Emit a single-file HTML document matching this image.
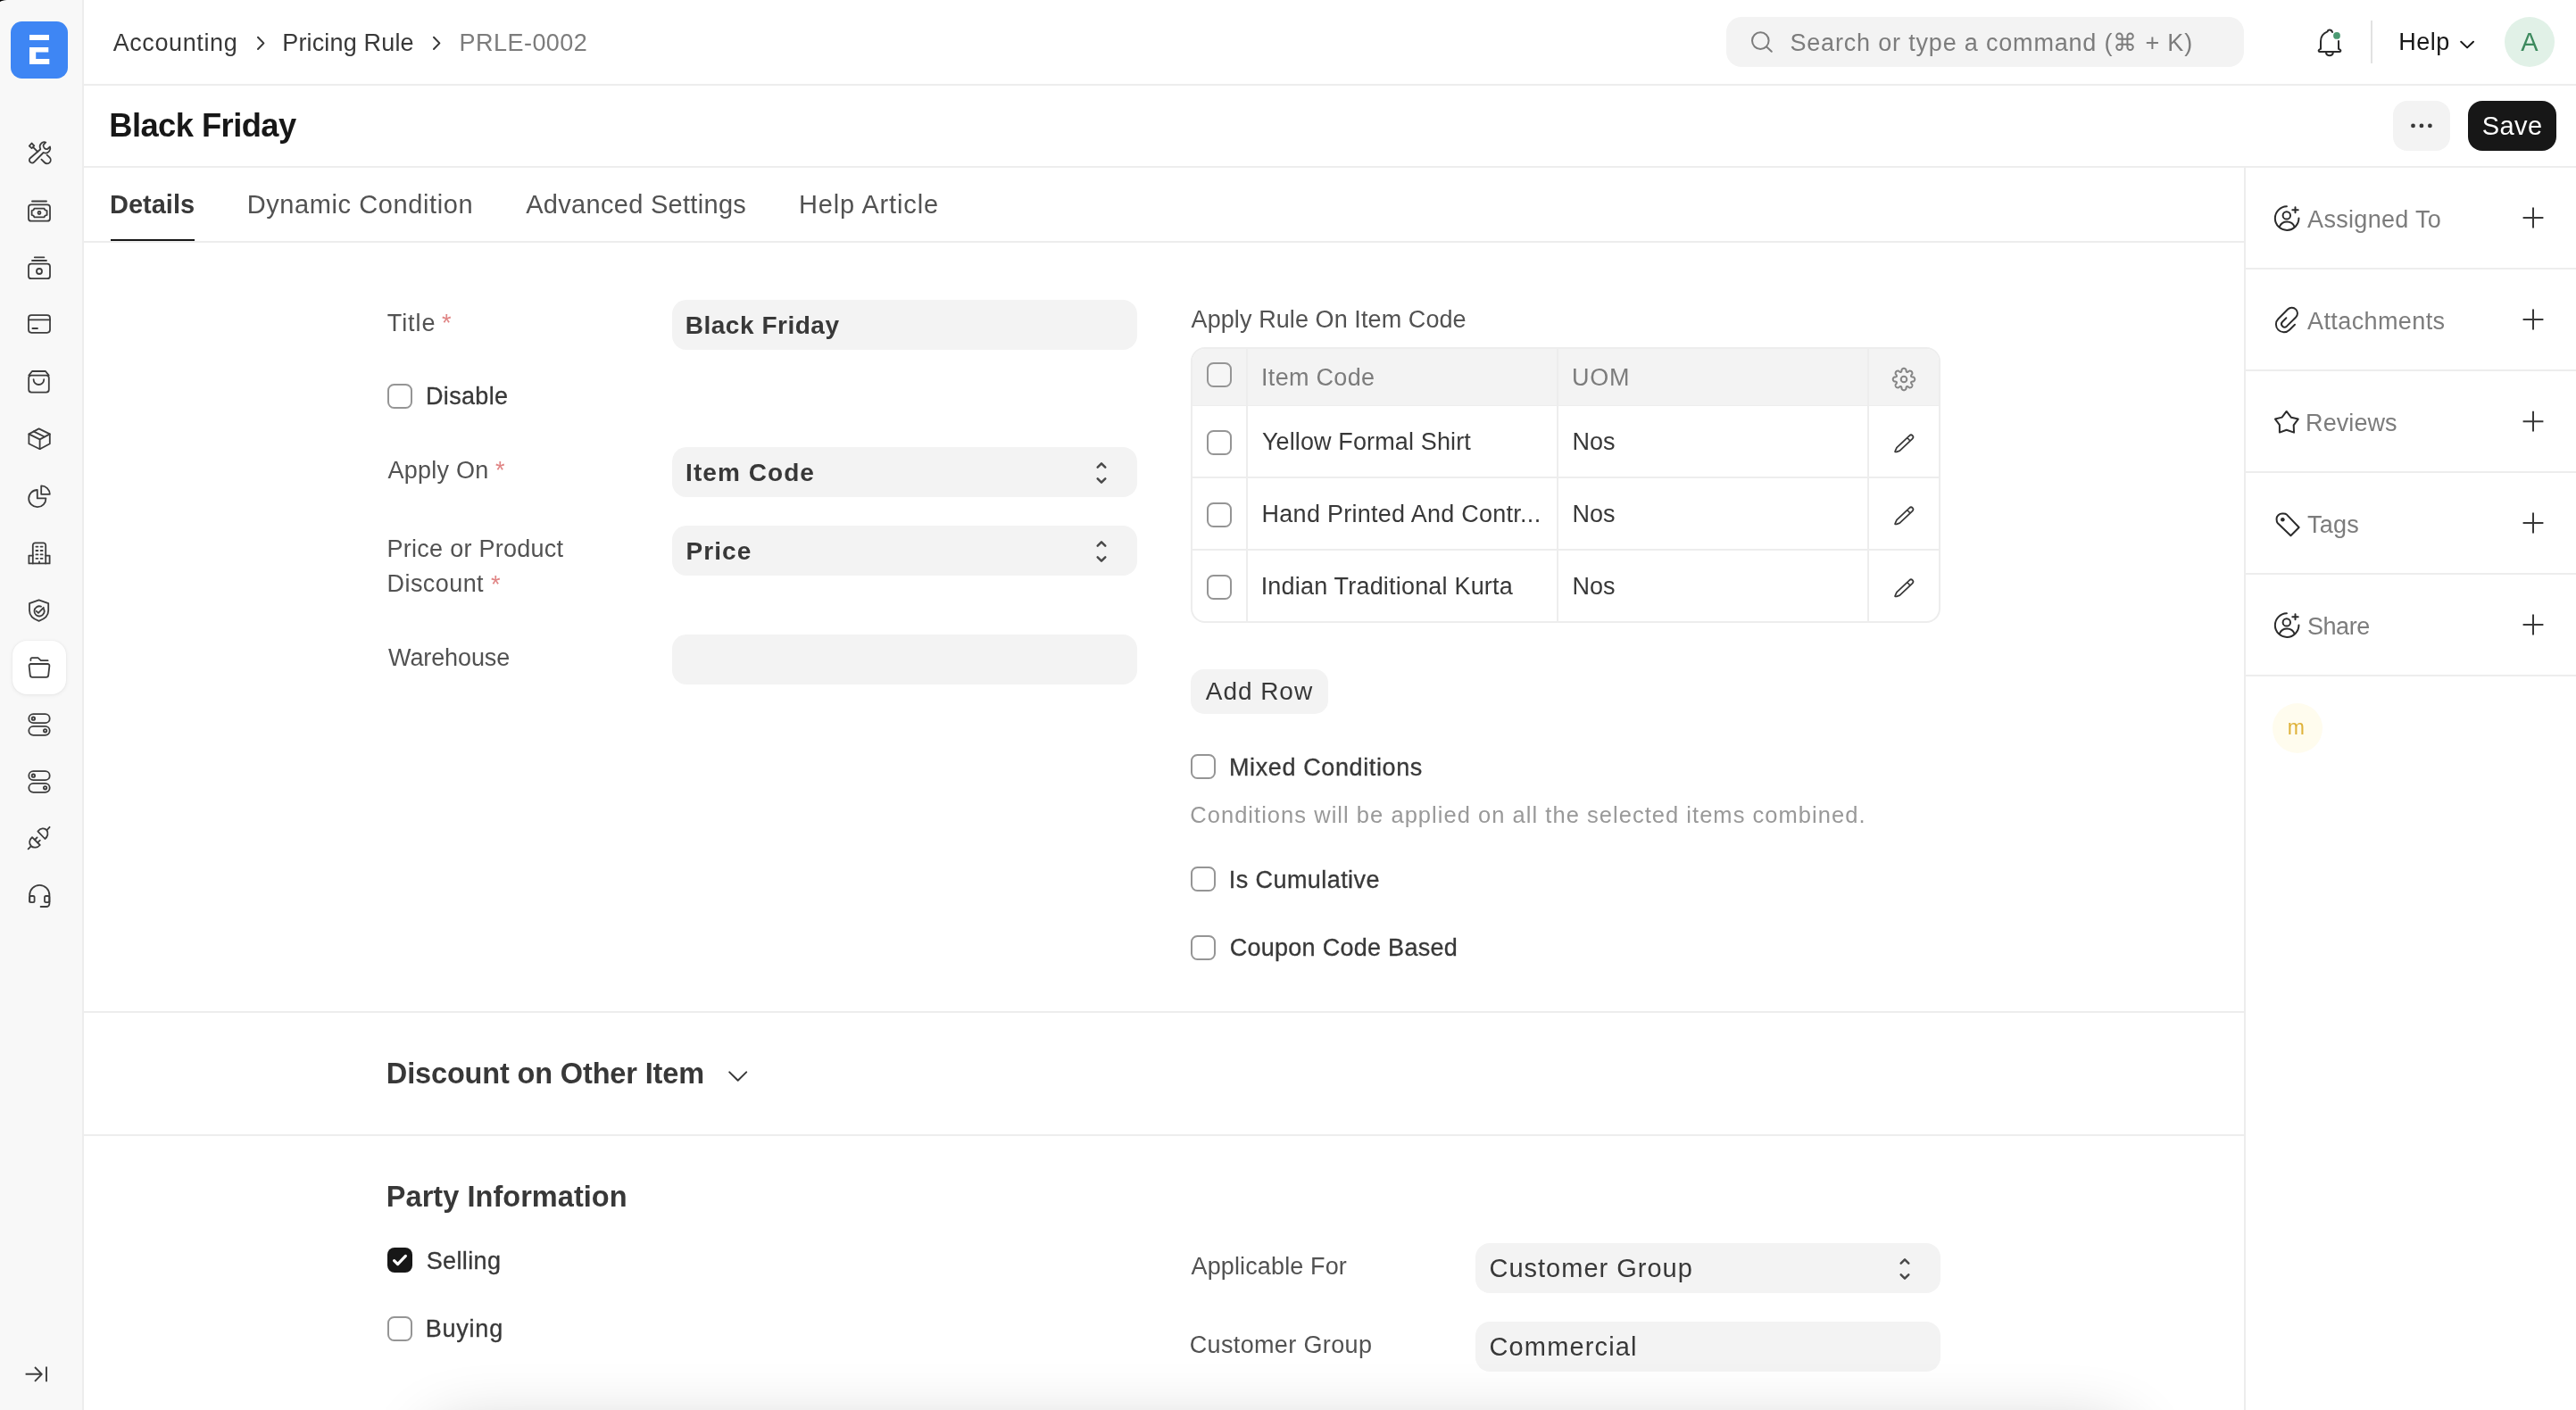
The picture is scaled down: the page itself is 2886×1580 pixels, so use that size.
<!DOCTYPE html>
<html lang="en"><head><meta charset="utf-8"><title>Black Friday - PRLE-0002</title>
<style>
html,body{margin:0;padding:0;}
body{width:2886px;height:1580px;overflow:hidden;background:#fff;position:relative;font-family:"Liberation Sans",sans-serif;}
.b{position:absolute;box-sizing:border-box;display:block;}
.tl{position:absolute;left:0;top:0;width:2886px;height:1580px;will-change:transform;}
.t{position:absolute;white-space:pre;line-height:1;display:block;font-kerning:normal;}
</style></head><body>
<div class="b" style="left:0px;top:0px;width:92px;height:1580px;background:#f8f8f8;"></div>
<div class="b" style="left:92px;top:0px;width:2px;height:1580px;background:#ededed;"></div>
<div class="b" style="left:12px;top:24px;width:64px;height:64px;background:#3e86f4;border-radius:12.5px;"></div>
<div class="b" style="left:14px;top:718px;width:60px;height:60px;background:#ffffff;border-radius:16px;box-shadow:0 1px 5px rgba(0,0,0,0.07),0 0 2px rgba(0,0,0,0.06);"></div>
<div class="b" style="left:94px;top:94px;width:2792px;height:2px;background:#ededed;"></div>
<div class="b" style="left:94px;top:186px;width:2792px;height:2px;background:#ededed;"></div>
<div class="b" style="left:94px;top:270px;width:2420px;height:2px;background:#ededed;"></div>
<div class="b" style="left:124px;top:268px;width:94px;height:2px;background:#171717;"></div>
<div class="b" style="left:2514px;top:188px;width:2px;height:1392px;background:#ededed;"></div>
<div class="b" style="left:2516px;top:300px;width:370px;height:2px;background:#ededed;"></div>
<div class="b" style="left:2516px;top:414px;width:370px;height:2px;background:#ededed;"></div>
<div class="b" style="left:2516px;top:528px;width:370px;height:2px;background:#ededed;"></div>
<div class="b" style="left:2516px;top:642px;width:370px;height:2px;background:#ededed;"></div>
<div class="b" style="left:2516px;top:756px;width:370px;height:2px;background:#ededed;"></div>
<div class="b" style="left:94px;top:1133px;width:2420px;height:2px;background:#ededed;"></div>
<div class="b" style="left:94px;top:1271px;width:2420px;height:2px;background:#ededed;"></div>
<div class="b" style="left:1934px;top:19px;width:580px;height:56px;background:#f3f3f3;border-radius:17px;"></div>
<div class="b" style="left:2656px;top:23px;width:2px;height:48px;background:#e2e2e2;"></div>
<div class="b" style="left:2806px;top:19px;width:56px;height:56px;background:#e1f1e7;border-radius:28px;"></div>
<div class="b" style="left:2681px;top:113px;width:64px;height:56px;background:#f3f3f3;border-radius:16px;"></div>
<div class="b" style="left:2765px;top:113px;width:99px;height:56px;background:#171717;border-radius:16px;"></div>
<div class="b" style="left:753px;top:336px;width:521px;height:56px;background:#f3f3f3;border-radius:16px;"></div>
<div class="b" style="left:753px;top:501px;width:521px;height:56px;background:#f3f3f3;border-radius:16px;"></div>
<div class="b" style="left:753px;top:589px;width:521px;height:56px;background:#f3f3f3;border-radius:16px;"></div>
<div class="b" style="left:753px;top:711px;width:521px;height:56px;background:#f3f3f3;border-radius:16px;"></div>
<div class="b" style="left:1653px;top:1393px;width:521px;height:56px;background:#f3f3f3;border-radius:16px;"></div>
<div class="b" style="left:1653px;top:1481px;width:521px;height:56px;background:#f3f3f3;border-radius:16px;"></div>
<div class="b" style="left:434px;top:430px;width:28px;height:28px;background:#fff;border-radius:7.5px;border:2px solid #959595;"></div>
<div class="b" style="left:1334px;top:845px;width:28px;height:28px;background:#fff;border-radius:7.5px;border:2px solid #959595;"></div>
<div class="b" style="left:1334px;top:971px;width:28px;height:28px;background:#fff;border-radius:7.5px;border:2px solid #959595;"></div>
<div class="b" style="left:1334px;top:1048px;width:28px;height:28px;background:#fff;border-radius:7.5px;border:2px solid #959595;"></div>
<div class="b" style="left:434px;top:1475px;width:28px;height:28px;background:#fff;border-radius:7.5px;border:2px solid #959595;"></div>
<div class="b" style="left:434px;top:1398px;width:28px;height:28px;background:#171717;border-radius:8px;"></div>
<div class="b" style="left:1334px;top:389px;width:840px;height:309px;background:#fff;border-radius:16px;border:2px solid #ededed;"></div>
<div class="b" style="left:1336px;top:391px;width:836px;height:63px;background:#f3f3f3;border-radius:14px 14px 0 0;"></div>
<div class="b" style="left:1336px;top:454px;width:836px;height:1px;background:#ededed;"></div>
<div class="b" style="left:1336px;top:534px;width:836px;height:2px;background:#ededed;"></div>
<div class="b" style="left:1336px;top:615px;width:836px;height:2px;background:#ededed;"></div>
<div class="b" style="left:1396px;top:391px;width:2px;height:305px;background:#ededed;"></div>
<div class="b" style="left:1744px;top:391px;width:2px;height:305px;background:#ededed;"></div>
<div class="b" style="left:2092px;top:391px;width:2px;height:305px;background:#ededed;"></div>
<div class="b" style="left:1352px;top:406px;width:28px;height:28px;background:#f6f6f6;border-radius:7.5px;border:2px solid #959595;"></div>
<div class="b" style="left:1352px;top:482px;width:28px;height:28px;background:#fff;border-radius:7.5px;border:2px solid #959595;"></div>
<div class="b" style="left:1352px;top:563px;width:28px;height:28px;background:#fff;border-radius:7.5px;border:2px solid #959595;"></div>
<div class="b" style="left:1352px;top:644px;width:28px;height:28px;background:#fff;border-radius:7.5px;border:2px solid #959595;"></div>
<div class="b" style="left:1334px;top:750px;width:154px;height:50px;background:#f3f3f3;border-radius:15px;"></div>
<div class="b" style="left:2546px;top:788px;width:56px;height:56px;background:#fffcee;border-radius:28px;"></div>
<div class="b" style="left:484px;top:1604px;width:1900px;height:200px;background:#fff;border-radius:30px;box-shadow:0 0 74px rgba(0,0,0,0.24);"></div>
<svg class="b" style="left:12px;top:24px" width="64" height="64" viewBox="12 24 64 64" fill="none" stroke="#383838" stroke-width="2" stroke-linecap="round" stroke-linejoin="round"><path d="M33 39h22v6H33z M33 53h21.3v5.6H40.2v7.4H55.3v6H33z" fill="#fff" stroke="none"/></svg>
<svg class="b" style="left:28px;top:156px" width="32" height="32" viewBox="28 156 32 32" fill="none" stroke="#3d3d3d" stroke-width="1.8" stroke-linecap="round" stroke-linejoin="round">
<path d="M45.3 167.2C44.2 164.7 44.8 161.7 47 160.1C48.3 159.2 50 159 51.3 159.5L48.6 162.3C48.3 163.6 48.8 165.1 49.6 165.9C50.5 166.9 52 167.4 53.3 167L56 164.4C56.6 166 56.3 167.8 55.3 169.2C53.8 171.3 51 172 48.6 171L38.2 181.6C37 182.8 35 182.8 33.8 181.6C32.6 180.4 32.6 178.4 33.8 177.2Z"/>
<path d="M32.8 163.6L35.5 160.5L38.3 163.3L35.6 166.1Z M37 164.8L42.3 170.2"/>
<path d="M46.4 178.6L49.8 182C51.5 183.7 54.3 183.7 55.8 182C57.2 180.4 57 177.9 55.5 176.4L52.6 173.6"/>
</svg>
<svg class="b" style="left:28px;top:220px" width="32" height="32" viewBox="28 220 32 32" fill="none" stroke="#3d3d3d" stroke-width="1.8" stroke-linecap="round" stroke-linejoin="round">
<path d="M36 225.5H52"/>
<rect x="32" y="229.3" width="24" height="18.4" rx="3"/>
<path d="M38.6 233.6H49.4L50.6 235.4L52.6 236V241L50.6 241.6L49.4 243.4H38.6L37.4 241.6L35.6 241V236L37.4 235.4Z"/>
<circle cx="44" cy="238.5" r="1.5"/>
</svg>
<svg class="b" style="left:28px;top:284px" width="32" height="32" viewBox="28 284 32 32" fill="none" stroke="#3d3d3d" stroke-width="1.8" stroke-linecap="round" stroke-linejoin="round">
<path d="M38.8 288.3H49.4 M36 292H52"/>
<rect x="32" y="295.7" width="24" height="16.5" rx="3"/>
<circle cx="44" cy="304" r="3"/>
</svg>
<svg class="b" style="left:28px;top:348px" width="32" height="32" viewBox="28 348 32 32" fill="none" stroke="#3d3d3d" stroke-width="1.8" stroke-linecap="round" stroke-linejoin="round">
<rect x="32" y="353.2" width="24" height="19.6" rx="3.2"/>
<path d="M32 358.4H56 M36.4 368H42"/>
</svg>
<svg class="b" style="left:28px;top:412px" width="32" height="32" viewBox="28 412 32 32" fill="none" stroke="#3d3d3d" stroke-width="1.8" stroke-linecap="round" stroke-linejoin="round">
<path d="M32.3 420.6L36 416H51L54.7 420.6"/>
<rect x="32.2" y="420.6" width="22.6" height="19" rx="3"/>
<path d="M37.6 425.2A5.8 5.8 0 0 0 49.2 425.2"/>
</svg>
<svg class="b" style="left:28px;top:476px" width="32" height="32" viewBox="28 476 32 32" fill="none" stroke="#3d3d3d" stroke-width="1.8" stroke-linecap="round" stroke-linejoin="round">
<path d="M43.6 480.4L55.8 486.4V497.2L44.6 503.2L32.4 497.2V486.4Z"/>
<path d="M32.4 486.4L44.6 492.4L55.8 486.4 M44.6 492.4V503.2 M37.6 483.4L50 489.5"/>
</svg>
<svg class="b" style="left:28px;top:540px" width="32" height="32" viewBox="28 540 32 32" fill="none" stroke="#3d3d3d" stroke-width="1.8" stroke-linecap="round" stroke-linejoin="round">
<path d="M41.8 549A9.6 9.6 0 1 0 51.4 558.4H41.8Z"/>
<path d="M46.2 544.4A9.6 9.6 0 0 1 55.8 553.8H46.2Z"/>
</svg>
<svg class="b" style="left:28px;top:604px" width="32" height="32" viewBox="28 604 32 32" fill="none" stroke="#3d3d3d" stroke-width="1.8" stroke-linecap="round" stroke-linejoin="round">
<path d="M36.8 631.4V611A2.6 2.6 0 0 1 39.4 608.4H48.6A2.6 2.6 0 0 1 51.2 611V631.4"/>
<path d="M36.8 622.6H32.4V631.4H55.6V622.6H51.2"/>
<path d="M40.4 612.6H42.4 M45.6 612.6H47.6 M40.4 617H42.4 M45.6 617H47.6 M40.4 621.4H42.4 M45.6 621.4H47.6 M40.4 625.8H42.4 M45.6 625.8H47.6 M44 629.4V631"/>
</svg>
<svg class="b" style="left:28px;top:668px" width="32" height="32" viewBox="28 668 32 32" fill="none" stroke="#3d3d3d" stroke-width="1.8" stroke-linecap="round" stroke-linejoin="round">
<path d="M43.6 672.4L54.2 676.2V684C54.2 690 49.6 693.8 43.6 695.8C37.6 693.8 33 690 33 684V676.2Z"/>
<path d="M49 682.2A5.6 5.6 0 1 1 46 679.6"/>
<path d="M40.8 684.8L43 686.8L48.8 680.8"/>
</svg>
<svg class="b" style="left:28px;top:732px" width="32" height="32" viewBox="28 732 32 32" fill="none" stroke="#3d3d3d" stroke-width="1.8" stroke-linecap="round" stroke-linejoin="round">
<path d="M34.4 740V738.6A1.4 1.4 0 0 1 35.8 737.2H42.6L45.8 740.2H53.6"/>
<path d="M34.6 744H53.4A2 2 0 0 1 55.4 746.2L54.2 756.6A2.4 2.4 0 0 1 51.8 758.8H36.2A2.4 2.4 0 0 1 33.8 756.6L32.6 746.2A2 2 0 0 1 34.6 744Z"/>
</svg>
<svg class="b" style="left:28px;top:796px" width="32" height="32" viewBox="28 796 32 32" fill="none" stroke="#3d3d3d" stroke-width="1.8" stroke-linecap="round" stroke-linejoin="round">
<rect x="32.3" y="800.2" width="23.4" height="10" rx="5"/>
<rect x="32.3" y="813.8" width="23.4" height="10" rx="5"/>
<circle cx="37.4" cy="805.2" r="1.7"/>
<circle cx="50.6" cy="818.8" r="1.7"/>
</svg>
<svg class="b" style="left:28px;top:860px" width="32" height="32" viewBox="28 860 32 32" fill="none" stroke="#3d3d3d" stroke-width="1.8" stroke-linecap="round" stroke-linejoin="round">
<rect x="32.3" y="864.2" width="23.4" height="10" rx="5"/>
<rect x="32.3" y="877.8" width="23.4" height="10" rx="5"/>
<circle cx="37.4" cy="869.2" r="1.7"/>
<circle cx="50.6" cy="882.8" r="1.7"/>
</svg>
<svg class="b" style="left:28px;top:922px" width="32" height="34" viewBox="28 922 32 34" fill="none" stroke="#3d3d3d" stroke-width="1.8" stroke-linecap="round" stroke-linejoin="round">
<path d="M42.4 931.6L50.4 940C53.4 937.6 54.6 933.4 52.4 930.4C50 927.4 45.4 927.6 42.4 931.6Z"/>
<path d="M52.8 929.8L55.6 926.8"/>
<path d="M36 938.2L44.8 947C42 950.2 37.4 950.6 34.8 948C32.2 945.4 32.6 941 36 938.2Z"/>
<path d="M34.4 948.6L31.6 951.4 M39 941L41.6 938.4 M42.2 944.2L44.8 941.6"/>
</svg>
<svg class="b" style="left:28px;top:986px" width="32" height="34" viewBox="28 986 32 34" fill="none" stroke="#3d3d3d" stroke-width="1.8" stroke-linecap="round" stroke-linejoin="round">
<path d="M33.2 1010.4V1003A11.1 11.1 0 0 1 55.4 1003V1010.4"/>
<rect x="33.2" y="1004" width="5.4" height="7.2" rx="1.6"/>
<rect x="50" y="1004" width="5.4" height="7.2" rx="1.6"/>
<path d="M55.4 1010.4V1012.6A3.4 3.4 0 0 1 52 1016H45.6"/>
</svg>
<svg class="b" style="left:24px;top:1526px" width="34" height="28" viewBox="24 1526 34 28" fill="none" stroke="#3d3d3d" stroke-width="1.9" stroke-linecap="butt" stroke-linejoin="round"><path d="M28.6 1539.8H46.6 M39 1532L46.8 1539.8L39 1547.8 M52 1531.6V1548.2"/></svg>
<svg class="b" style="left:284px;top:36px" width="16" height="24" viewBox="284 36 16 24" fill="none" stroke="#383838" stroke-width="2" stroke-linecap="round" stroke-linejoin="round"><path d="M289 41.8L295.4 48.4L289 55"/></svg>
<svg class="b" style="left:481px;top:36px" width="16" height="24" viewBox="481 36 16 24" fill="none" stroke="#383838" stroke-width="2" stroke-linecap="round" stroke-linejoin="round"><path d="M486 41.8L492.4 48.4L486 55"/></svg>
<svg class="b" style="left:1958px;top:32px" width="32" height="30" viewBox="1958 32 32 30" fill="none" stroke="#7c7c7c" stroke-width="2" stroke-linecap="round" stroke-linejoin="round"><circle cx="1972.3" cy="45.6" r="9.3"/><path d="M1979.2 52.5L1984.8 57.8"/></svg>
<svg class="b" style="left:2592px;top:28px" width="36" height="40" viewBox="2592 28 36 40" fill="none" stroke="#2b2b2b" stroke-width="2" stroke-linecap="round" stroke-linejoin="round">
<path d="M2600 54.6V46.2C2600 41 2603 37.2 2607.6 35.4C2607.8 34.2 2608.8 33.6 2610 33.6C2611.6 33.6 2612.6 34.8 2613 36"/>
<path d="M2620 46V54.6"/>
<path d="M2600 54.6L2598 56C2597.2 56.8 2597.8 58 2599 58H2621C2622.2 58 2622.8 56.8 2622 56L2620 54.6"/>
<path d="M2606 59.2C2606.4 61 2608 62.2 2609.9 62.2C2611.8 62.2 2613.4 61 2613.8 59.2"/>
<circle cx="2618" cy="39.9" r="3.9" fill="#4b9a72" stroke="none"/>
</svg>
<svg class="b" style="left:2752px;top:42px" width="24" height="16" viewBox="2752 42 24 16" fill="none" stroke="#171717" stroke-width="2" stroke-linecap="round" stroke-linejoin="round"><path d="M2757.2 46.8L2764.1 53.4L2771 46.8"/></svg>
<svg class="b" style="left:2698px;top:134px" width="30" height="14" viewBox="2698 134 30 14" fill="#383838" stroke="none" stroke-width="2" stroke-linecap="round" stroke-linejoin="round"><circle cx="2703.5" cy="140.9" r="2.4"/><circle cx="2712.9" cy="140.9" r="2.4"/><circle cx="2722.4" cy="140.9" r="2.4"/></svg>
<svg class="b" style="left:1226.3px;top:513px" width="16.0" height="34" viewBox="1226.3 513 16.0 34" fill="none" stroke="#484848" stroke-width="2.5" stroke-linecap="round" stroke-linejoin="round"><path d="M1230.0 523.6L1234.3 519.4L1238.6 523.6 M1230.0 536.4L1234.3 540.6L1238.6 536.4"/></svg>
<svg class="b" style="left:1226.3px;top:601px" width="16.0" height="34" viewBox="1226.3 601 16.0 34" fill="none" stroke="#484848" stroke-width="2.5" stroke-linecap="round" stroke-linejoin="round"><path d="M1230.0 611.6L1234.3 607.4L1238.6 611.6 M1230.0 624.4L1234.3 628.6L1238.6 624.4"/></svg>
<svg class="b" style="left:2126.3px;top:1405px" width="16.0" height="34" viewBox="2126.3 1405 16.0 34" fill="none" stroke="#484848" stroke-width="2.5" stroke-linecap="round" stroke-linejoin="round"><path d="M2130.0 1415.6L2134.3 1411.4L2138.6000000000004 1415.6 M2130.0 1428.4L2134.3 1432.6L2138.6000000000004 1428.4"/></svg>
<svg class="b" style="left:2117px;top:409px" width="32" height="32" viewBox="2117 409 32 32" fill="none" stroke="#858585" stroke-width="2" stroke-linecap="round" stroke-linejoin="round"><path d="M2145.25 425.00L2145.23 425.32L2145.17 425.64L2145.06 425.95L2144.91 426.25L2144.72 426.54L2144.49 426.82L2144.22 427.08L2143.89 427.31L2143.42 427.50L2142.44 427.53L2141.97 427.66L2141.64 427.81L2141.38 427.97L2141.20 428.15L2141.08 428.35L2141.03 428.57L2141.03 428.83L2141.09 429.12L2141.22 429.47L2141.46 429.89L2142.14 430.60L2142.33 431.06L2142.40 431.46L2142.42 431.84L2142.38 432.20L2142.31 432.54L2142.20 432.86L2142.05 433.15L2141.87 433.42L2141.66 433.66L2141.42 433.87L2141.15 434.05L2140.86 434.20L2140.54 434.31L2140.20 434.38L2139.84 434.42L2139.46 434.40L2139.06 434.33L2138.60 434.14L2137.89 433.46L2137.47 433.22L2137.12 433.09L2136.83 433.03L2136.57 433.03L2136.35 433.08L2136.15 433.20L2135.97 433.38L2135.81 433.64L2135.66 433.97L2135.53 434.44L2135.50 435.42L2135.31 435.89L2135.08 436.22L2134.82 436.49L2134.54 436.72L2134.25 436.91L2133.95 437.06L2133.64 437.17L2133.32 437.23L2133.00 437.25L2132.68 437.23L2132.36 437.17L2132.05 437.06L2131.75 436.91L2131.46 436.72L2131.18 436.49L2130.92 436.22L2130.69 435.89L2130.50 435.42L2130.47 434.44L2130.34 433.97L2130.19 433.64L2130.03 433.38L2129.85 433.20L2129.65 433.08L2129.43 433.03L2129.17 433.03L2128.88 433.09L2128.53 433.22L2128.11 433.46L2127.40 434.14L2126.94 434.33L2126.54 434.40L2126.16 434.42L2125.80 434.38L2125.46 434.31L2125.14 434.20L2124.85 434.05L2124.58 433.87L2124.34 433.66L2124.13 433.42L2123.95 433.15L2123.80 432.86L2123.69 432.54L2123.62 432.20L2123.58 431.84L2123.60 431.46L2123.67 431.06L2123.86 430.60L2124.54 429.89L2124.78 429.47L2124.91 429.12L2124.97 428.83L2124.97 428.57L2124.92 428.35L2124.80 428.15L2124.62 427.97L2124.36 427.81L2124.03 427.66L2123.56 427.53L2122.58 427.50L2122.11 427.31L2121.78 427.08L2121.51 426.82L2121.28 426.54L2121.09 426.25L2120.94 425.95L2120.83 425.64L2120.77 425.32L2120.75 425.00L2120.77 424.68L2120.83 424.36L2120.94 424.05L2121.09 423.75L2121.28 423.46L2121.51 423.18L2121.78 422.92L2122.11 422.69L2122.58 422.50L2123.56 422.47L2124.03 422.34L2124.36 422.19L2124.62 422.03L2124.80 421.85L2124.92 421.65L2124.97 421.43L2124.97 421.17L2124.91 420.88L2124.78 420.53L2124.54 420.11L2123.86 419.40L2123.67 418.94L2123.60 418.54L2123.58 418.16L2123.62 417.80L2123.69 417.46L2123.80 417.14L2123.95 416.85L2124.13 416.58L2124.34 416.34L2124.58 416.13L2124.85 415.95L2125.14 415.80L2125.46 415.69L2125.80 415.62L2126.16 415.58L2126.54 415.60L2126.94 415.67L2127.40 415.86L2128.11 416.54L2128.53 416.78L2128.88 416.91L2129.17 416.97L2129.43 416.97L2129.65 416.92L2129.85 416.80L2130.03 416.62L2130.19 416.36L2130.34 416.03L2130.47 415.56L2130.50 414.58L2130.69 414.11L2130.92 413.78L2131.18 413.51L2131.46 413.28L2131.75 413.09L2132.05 412.94L2132.36 412.83L2132.68 412.77L2133.00 412.75L2133.32 412.77L2133.64 412.83L2133.95 412.94L2134.25 413.09L2134.54 413.28L2134.82 413.51L2135.08 413.78L2135.31 414.11L2135.50 414.58L2135.53 415.56L2135.66 416.03L2135.81 416.36L2135.97 416.62L2136.15 416.80L2136.35 416.92L2136.57 416.97L2136.83 416.97L2137.12 416.91L2137.47 416.78L2137.89 416.54L2138.60 415.86L2139.06 415.67L2139.46 415.60L2139.84 415.58L2140.20 415.62L2140.54 415.69L2140.86 415.80L2141.15 415.95L2141.42 416.13L2141.66 416.34L2141.87 416.58L2142.05 416.85L2142.20 417.14L2142.31 417.46L2142.38 417.80L2142.42 418.16L2142.40 418.54L2142.33 418.94L2142.14 419.40L2141.46 420.11L2141.22 420.53L2141.09 420.88L2141.03 421.17L2141.03 421.43L2141.08 421.65L2141.20 421.85L2141.38 422.03L2141.64 422.19L2141.97 422.34L2142.44 422.47L2143.42 422.50L2143.89 422.69L2144.22 422.92L2144.49 423.18L2144.72 423.46L2144.91 423.75L2145.06 424.05L2145.17 424.36L2145.23 424.68Z"/><circle cx="2133" cy="425" r="3.3"/></svg>
<svg class="b" style="left:2117px;top:481px" width="32" height="32" viewBox="2117 481 32 32" fill="none" stroke="#383838" stroke-width="1.7" stroke-linecap="round" stroke-linejoin="round"><g transform="translate(2123.3 506.6) rotate(-43.6)"><path d="M0.4 0.2C0 0 0 -0.3 0.3 -0.6L4.6 -2.4H24.4A2.4 2.4 0 0 1 24.4 2.4H4.6L1.2 0.9C0.8 0.7 0.6 0.4 0.4 0.2Z M20.8 -2.4V2.4"/></g></svg>
<svg class="b" style="left:2117px;top:562px" width="32" height="32" viewBox="2117 562 32 32" fill="none" stroke="#383838" stroke-width="1.7" stroke-linecap="round" stroke-linejoin="round"><g transform="translate(2123.3 587.6) rotate(-43.6)"><path d="M0.4 0.2C0 0 0 -0.3 0.3 -0.6L4.6 -2.4H24.4A2.4 2.4 0 0 1 24.4 2.4H4.6L1.2 0.9C0.8 0.7 0.6 0.4 0.4 0.2Z M20.8 -2.4V2.4"/></g></svg>
<svg class="b" style="left:2117px;top:643px" width="32" height="32" viewBox="2117 643 32 32" fill="none" stroke="#383838" stroke-width="1.7" stroke-linecap="round" stroke-linejoin="round"><g transform="translate(2123.3 668.6) rotate(-43.6)"><path d="M0.4 0.2C0 0 0 -0.3 0.3 -0.6L4.6 -2.4H24.4A2.4 2.4 0 0 1 24.4 2.4H4.6L1.2 0.9C0.8 0.7 0.6 0.4 0.4 0.2Z M20.8 -2.4V2.4"/></g></svg>
<svg class="b" style="left:812px;top:1196px" width="30" height="20" viewBox="812 1196 30 20" fill="none" stroke="#383838" stroke-width="2" stroke-linecap="round" stroke-linejoin="round"><path d="M817.2 1201.4L826.7 1210.8L836.2 1201.4"/></svg>
<svg class="b" style="left:436px;top:1400px" width="24" height="24" viewBox="436 1400 24 24" fill="none" stroke="#fff" stroke-width="3.2" stroke-linecap="round" stroke-linejoin="round"><path d="M441.6 1412.6L445.6 1416.6L454.4 1407.4"/></svg>
<svg class="b" style="left:2544px;top:226px" width="38" height="38" viewBox="2544 226 38 38" fill="none" stroke="#2b2b2b" stroke-width="2.0" stroke-linecap="round" stroke-linejoin="round"><path d="M2561.92 231.30A13.3 13.3 0 1 0 2575.45 244.60"/><circle cx="2561.8" cy="241.4" r="4.2"/><path d="M2553.9 253.9A9.1 9.1 0 0 1 2570.6 254.1"/><path d="M2568.3 235.29999999999998H2574.7000000000003 M2571.5 232.29999999999998V238.29999999999998"/></svg>
<svg class="b" style="left:2544px;top:682px" width="38" height="38" viewBox="2544 682 38 38" fill="none" stroke="#2b2b2b" stroke-width="2.0" stroke-linecap="round" stroke-linejoin="round"><path d="M2561.92 687.30A13.3 13.3 0 1 0 2575.45 700.60"/><circle cx="2561.8" cy="697.4" r="4.2"/><path d="M2553.9 709.9A9.1 9.1 0 0 1 2570.6 710.1"/><path d="M2568.3 691.3000000000001H2574.7000000000003 M2571.5 688.3000000000001V694.3000000000001"/></svg>
<svg class="b" style="left:2544px;top:340px" width="36" height="38" viewBox="2544 340 36 38" fill="none" stroke="#2b2b2b" stroke-width="1.95" stroke-linecap="round" stroke-linejoin="round"><path d="M2571 363.8L2564.9 369.7A8.8 8.8 0 0 1 2552.5 357.2L2563.16 346.56A6.35 6.35 0 0 1 2572.14 355.54L2561.87 365.67A3.5 3.5 0 0 1 2556.93 360.73L2561.4 356.2"/></svg>
<svg class="b" style="left:2544px;top:456px" width="36" height="34" viewBox="2544 456 36 34" fill="none" stroke="#2b2b2b" stroke-width="2.0" stroke-linecap="round" stroke-linejoin="round"><path d="M2561.66 460.94L2556.6 467.6L2549 469.57L2553.9 476.1L2553.9 484.6L2561.66 481.8L2570 484.6L2569.7 476.4L2574.76 469.57L2567 467.8Z"/></svg>
<svg class="b" style="left:2544px;top:570px" width="38" height="36" viewBox="2544 570 38 36" fill="none" stroke="#2b2b2b" stroke-width="2.0" stroke-linecap="round" stroke-linejoin="round"><path d="M2561.66 576.42L2575.66 591.02L2566.42 600.25L2551.83 586.25C2550.7 585.1 2550.55 583.2 2550.55 581.5C2550.55 578.2 2553.6 575.5 2556.9 575.5C2558.8 575.5 2560.46 575.22 2561.66 576.42Z"/><circle cx="2557.34" cy="582.23" r="2.3" fill="#2b2b2b" stroke="none"/></svg>
<svg class="b" style="left:2822px;top:228px" width="32" height="32" viewBox="2822 228 32 32" fill="none" stroke="#383838" stroke-width="2" stroke-linecap="butt" stroke-linejoin="round"><path d="M2826.6 244H2849.4 M2838 232.6V255.4"/></svg>
<svg class="b" style="left:2822px;top:342px" width="32" height="32" viewBox="2822 342 32 32" fill="none" stroke="#383838" stroke-width="2" stroke-linecap="butt" stroke-linejoin="round"><path d="M2826.6 358H2849.4 M2838 346.6V369.4"/></svg>
<svg class="b" style="left:2822px;top:456px" width="32" height="32" viewBox="2822 456 32 32" fill="none" stroke="#383838" stroke-width="2" stroke-linecap="butt" stroke-linejoin="round"><path d="M2826.6 472.2H2849.4 M2838 460.8V483.59999999999997"/></svg>
<svg class="b" style="left:2822px;top:570px" width="32" height="32" viewBox="2822 570 32 32" fill="none" stroke="#383838" stroke-width="2" stroke-linecap="butt" stroke-linejoin="round"><path d="M2826.6 586H2849.4 M2838 574.6V597.4"/></svg>
<svg class="b" style="left:2822px;top:684px" width="32" height="32" viewBox="2822 684 32 32" fill="none" stroke="#383838" stroke-width="2" stroke-linecap="butt" stroke-linejoin="round"><path d="M2826.6 700H2849.4 M2838 688.6V711.4"/></svg>
<svg class="b" style="left:0px;top:0px" width="10" height="4" viewBox="0 0 10 4" fill="none" stroke="#383838" stroke-width="2" stroke-linecap="round" stroke-linejoin="round"><path d="M0 0H7.6C4.2 0.3 1.6 1 0 2.1Z" fill="#000" stroke="none"/></svg>
<div class="tl">
<span class="t" style="left:126.63px;top:35px;font-size:27px;color:#383838;letter-spacing:0.615px;">Accounting</span>
<span class="t" style="left:316.21px;top:35px;font-size:27px;color:#383838;letter-spacing:0.166px;">Pricing Rule</span>
<span class="t" style="left:514.58px;top:35px;font-size:27px;color:#7c7c7c;letter-spacing:0.455px;">PRLE-0002</span>
<span class="t" style="left:2005.47px;top:35px;font-size:27px;color:#7c7c7c;letter-spacing:0.815px;">Search or type a command (⌘ + K)</span>
<span class="t" style="left:2687.37px;top:34px;font-size:27px;color:#171717;letter-spacing:0.442px;">Help</span>
<span class="t" style="left:2824.26px;top:33px;font-size:29px;color:#3d8a5e;letter-spacing:0.000px;">A</span>
<span class="t" style="left:122.26px;top:123px;font-size:36.3px;color:#171717;letter-spacing:-0.545px;font-weight:700;">Black Friday</span>
<span class="t" style="left:2780.68px;top:127px;font-size:29px;color:#ffffff;letter-spacing:0.433px;">Save</span>
<span class="t" style="left:123.05px;top:215px;font-size:29px;color:#383838;letter-spacing:-0.012px;font-weight:700;">Details</span>
<span class="t" style="left:276.63px;top:215px;font-size:29px;color:#525252;letter-spacing:0.600px;">Dynamic Condition</span>
<span class="t" style="left:589.21px;top:215px;font-size:29px;color:#525252;letter-spacing:0.299px;">Advanced Settings</span>
<span class="t" style="left:895.05px;top:215px;font-size:29px;color:#525252;letter-spacing:0.854px;">Help Article</span>
<span class="t" style="left:433.68px;top:349px;font-size:27px;color:#525252;letter-spacing:0.978px;">Title</span>
<span class="t" style="left:494.89px;top:349px;font-size:27px;color:#e08585;letter-spacing:0.000px;">*</span>
<span class="t" style="left:767.73px;top:351px;font-size:28px;color:#383838;letter-spacing:0.527px;font-weight:700;">Black Friday</span>
<span class="t" style="left:477.00px;top:431px;font-size:27px;color:#383838;letter-spacing:0.329px;-webkit-text-stroke:0.3px #383838;">Disable</span>
<span class="t" style="left:434.58px;top:514px;font-size:27px;color:#525252;letter-spacing:0.243px;">Apply On</span>
<span class="t" style="left:554.89px;top:514px;font-size:27px;color:#e08585;letter-spacing:0.000px;">*</span>
<span class="t" style="left:768.05px;top:516px;font-size:28px;color:#383838;letter-spacing:1.061px;font-weight:700;">Item Code</span>
<span class="t" style="left:433.58px;top:602px;font-size:27px;color:#525252;letter-spacing:0.258px;">Price or Product</span>
<span class="t" style="left:433.58px;top:641px;font-size:27px;color:#525252;letter-spacing:0.426px;">Discount</span>
<span class="t" style="left:549.89px;top:642px;font-size:27px;color:#e08585;letter-spacing:0.000px;">*</span>
<span class="t" style="left:768.47px;top:604px;font-size:28px;color:#383838;letter-spacing:1.087px;font-weight:700;">Price</span>
<span class="t" style="left:435.00px;top:724px;font-size:27px;color:#525252;letter-spacing:-0.105px;">Warehouse</span>
<span class="t" style="left:1334.58px;top:345px;font-size:27px;color:#525252;letter-spacing:0.085px;">Apply Rule On Item Code</span>
<span class="t" style="left:1413.05px;top:410px;font-size:27px;color:#7c7c7c;letter-spacing:0.301px;">Item Code</span>
<span class="t" style="left:1761.00px;top:410px;font-size:27px;color:#7c7c7c;letter-spacing:0.700px;">UOM</span>
<span class="t" style="left:1413.89px;top:482px;font-size:27px;color:#383838;letter-spacing:0.130px;">Yellow Formal Shirt</span>
<span class="t" style="left:1413.58px;top:563px;font-size:27px;color:#383838;letter-spacing:0.265px;">Hand Printed And Contr...</span>
<span class="t" style="left:1412.68px;top:644px;font-size:27px;color:#383838;letter-spacing:0.191px;">Indian Traditional Kurta</span>
<span class="t" style="left:1761.58px;top:482px;font-size:27px;color:#383838;letter-spacing:-0.047px;">Nos</span>
<span class="t" style="left:1761.58px;top:563px;font-size:27px;color:#383838;letter-spacing:-0.047px;">Nos</span>
<span class="t" style="left:1761.58px;top:644px;font-size:27px;color:#383838;letter-spacing:-0.047px;">Nos</span>
<span class="t" style="left:1350.84px;top:761px;font-size:28px;color:#383838;letter-spacing:0.945px;">Add Row</span>
<span class="t" style="left:1376.95px;top:847px;font-size:27px;color:#383838;letter-spacing:0.616px;-webkit-text-stroke:0.3px #383838;">Mixed Conditions</span>
<span class="t" style="left:1333.26px;top:901px;font-size:25.5px;color:#999999;letter-spacing:1.034px;">Conditions will be applied on all the selected items combined.</span>
<span class="t" style="left:1376.79px;top:973px;font-size:27px;color:#383838;letter-spacing:0.424px;-webkit-text-stroke:0.3px #383838;">Is Cumulative</span>
<span class="t" style="left:1377.63px;top:1049px;font-size:27px;color:#383838;letter-spacing:0.278px;-webkit-text-stroke:0.3px #383838;">Coupon Code Based</span>
<span class="t" style="left:432.84px;top:1187px;font-size:32.5px;color:#383838;letter-spacing:-0.148px;font-weight:700;">Discount on Other Item</span>
<span class="t" style="left:432.84px;top:1325px;font-size:32.5px;color:#383838;letter-spacing:0.043px;font-weight:700;">Party Information</span>
<span class="t" style="left:477.63px;top:1400px;font-size:27px;color:#383838;letter-spacing:0.389px;-webkit-text-stroke:0.3px #383838;">Selling</span>
<span class="t" style="left:476.63px;top:1476px;font-size:27px;color:#383838;letter-spacing:0.798px;-webkit-text-stroke:0.3px #383838;">Buying</span>
<span class="t" style="left:1334.58px;top:1406px;font-size:27px;color:#525252;letter-spacing:0.124px;">Applicable For</span>
<span class="t" style="left:1332.68px;top:1494px;font-size:27px;color:#525252;letter-spacing:0.363px;">Customer Group</span>
<span class="t" style="left:1668.47px;top:1407px;font-size:29px;color:#383838;letter-spacing:1.003px;">Customer Group</span>
<span class="t" style="left:1668.47px;top:1495px;font-size:29px;color:#383838;letter-spacing:1.155px;">Commercial</span>
<span class="t" style="left:2585.05px;top:233px;font-size:27px;color:#7c7c7c;letter-spacing:0.320px;">Assigned To</span>
<span class="t" style="left:2585.05px;top:347px;font-size:27px;color:#7c7c7c;letter-spacing:0.391px;">Attachments</span>
<span class="t" style="left:2583.05px;top:461px;font-size:27px;color:#7c7c7c;letter-spacing:0.089px;">Reviews</span>
<span class="t" style="left:2585.10px;top:575px;font-size:27px;color:#7c7c7c;letter-spacing:0.176px;">Tags</span>
<span class="t" style="left:2585.00px;top:689px;font-size:27px;color:#7c7c7c;letter-spacing:-0.456px;">Share</span>
<span class="t" style="left:2562.84px;top:804px;font-size:23px;color:#dfb23a;letter-spacing:0.000px;">m</span>
</div>
</body></html>
